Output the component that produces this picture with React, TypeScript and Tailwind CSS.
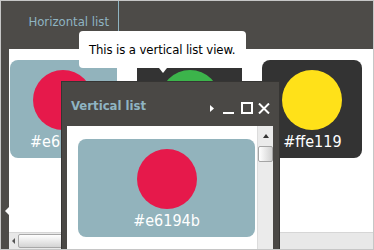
const items = [
  { color: '#e6194b', bg: 'bg-[#92b3bc]' },
  { color: '#3cb44b', bg: 'bg-[#333333]' },
  { color: '#ffe119', bg: 'bg-[#333333]' },
];

const font = { fontFamily: '"DejaVu Sans Condensed", "DejaVu Sans", sans-serif' };

const ColorItem = ({ color, bg, wide }: { color: string; bg: string; wide?: boolean }) => (
  <div
    className={`${bg} ${wide ? 'w-full' : 'px-[20px]'} h-[98px] shrink-0 rounded-[8px] pt-[10px] flex flex-col items-center`}
  >
    <div className="w-[60px] h-[60px] rounded-full" style={{ backgroundColor: color }} />
    <span className="mt-[2px] text-[16px] leading-[20px] text-white">{color}</span>
  </div>
);

const App = () => {
  return (
    <div
      className="relative w-[374px] h-[250px] overflow-hidden border border-[#c6c6c6] bg-[#4d4b48] flex flex-col"
      style={font}
    >
      {/* header */}
      <div className="h-[48px] shrink-0 flex">
        <div className="w-[118px] border-r border-[#8fb4c2] pt-[13px] pr-[9px] text-right text-[13px] leading-[16px] text-[#8fb4c2]">
          Horizontal list
        </div>
      </div>

      <div className="flex-1 flex min-h-0">
        {/* collapsed side strip */}
        <div className="w-[8px] shrink-0 pt-[158px] flex justify-end">
          <div className="w-0 h-0 border-y-[4px] border-y-transparent border-r-[4px] border-r-white" />
        </div>

        <div className="flex-1 bg-white flex flex-col min-w-0">
          <div className="flex-1 flex gap-[20px] pl-[1px] pt-[11px] overflow-hidden">
            {items.map((it) => (
              <ColorItem key={it.color} color={it.color} bg={it.bg} />
            ))}
          </div>
          {/* horizontal scrollbar */}
          <div className="h-[17px] shrink-0 bg-[#e8e8e8] border-t border-[#d6d6d6] flex items-center">
            <div className="w-[9px] h-full flex items-center justify-center">
              <div className="w-0 h-0 border-y-[3px] border-y-transparent border-r-[3px] border-r-[#555]" />
            </div>
            <div className="w-[190px] h-[14px] rounded-[2px] border border-[#a8a8a8] bg-gradient-to-b from-white to-[#d4d4d4]" />
          </div>
        </div>
      </div>

      {/* tooltip */}
      <div className="absolute left-[78px] top-[30px] w-[167px] h-[37px] rounded-[4px] bg-white pl-[10px] whitespace-nowrap text-[13px] tracking-[-0.1px] leading-[37px] text-black">
        This is a vertical list view.
        <div className="absolute left-[80px] top-[37px] w-0 h-0 border-x-[4px] border-x-transparent border-t-[5px] border-t-white" />
      </div>

      {/* vertical list window */}
      <div className="absolute left-[60px] top-[80px] w-[219px] h-[180px] border border-[#363533] bg-[#4a4845] flex flex-col">
        <div className="h-[44px] shrink-0 flex items-start pt-[16px] pl-[9px] pr-[9px]">
          <span className="text-[13px] leading-[16px] font-bold text-[#8fb4c2]">Vertical list</span>
          <div className="ml-auto flex items-center pt-[4px]">
            <svg width="4" height="7" viewBox="0 0 4 7">
              <path d="M0 0 L4 3.5 L0 7 Z" fill="#fff" />
            </svg>
            <svg className="ml-[9px]" width="11" height="11" viewBox="0 0 11 11">
              <rect x="0" y="9" width="11" height="2" fill="#fff" />
            </svg>
            <svg className="ml-[7px]" width="12" height="12" viewBox="0 0 12 12">
              <rect x="1" y="1" width="10" height="10" fill="none" stroke="#fff" strokeWidth="2" />
            </svg>
            <svg className="ml-[5px]" width="12" height="11" viewBox="0 0 12 11">
              <path d="M1 0.5 L11 10.5 M11 0.5 L1 10.5" stroke="#fff" strokeWidth="2" />
            </svg>
          </div>
        </div>
        <div className="flex-1 ml-[5px] mr-[6px] bg-white flex">
          <div className="flex-1 pl-[11px] pr-[2px] pt-[13px]">
            <ColorItem color="#e6194b" bg="bg-[#92b3bc]" wide />
          </div>
          {/* vertical scrollbar */}
          <div className="w-[16px] bg-[#ebebeb] border-l border-[#dcdcdc] flex flex-col items-center pt-[8px]">
            <div className="w-0 h-0 border-x-[3px] border-x-transparent border-b-[4px] border-b-[#333]" />
            <div className="mt-[8px] w-[15px] h-[16px] rounded-[2px] border border-[#a5a5a5] bg-gradient-to-r from-white to-[#d2d2d2]" />
          </div>
        </div>
      </div>
    </div>
  );
};

export default App;
